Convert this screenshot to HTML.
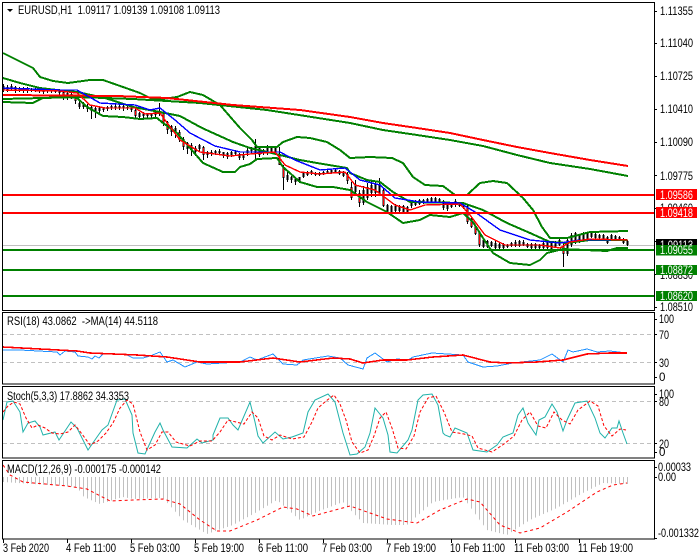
<!DOCTYPE html>
<html><head><meta charset="utf-8"><style>
html,body{margin:0;padding:0;background:#fff;width:700px;height:560px;overflow:hidden}
svg{display:block}
text{font-family:"Liberation Sans",sans-serif;font-size:11.5px;fill:#000}
.w{fill:#fff}
</style></head><body>
<svg width="700" height="560" viewBox="0 0 700 560" xmlns="http://www.w3.org/2000/svg">
<defs><pattern id="p" x="3" y="0" width="4" height="10" patternUnits="userSpaceOnUse"><rect x="0" y="0" width="1" height="10" fill="#c0c0c0"/></pattern></defs>
<rect width="700" height="560" fill="#fff"/>

<!-- horizontal levels under -->
<path d="M3 245.5H654" stroke="#c0c0c0" stroke-width="1"/>

<!-- candles -->
<g fill="none" stroke="#000" shape-rendering="crispEdges">
<path stroke-width="1" d="M3.5 84V92M7.5 85V92M11.5 84V91M15.5 86V93M19.5 87V92M23.5 87V93M27.5 87V93M31.5 88V92M35.5 88V92M39.5 87V93M43.5 88V94M47.5 88V93M51.5 89V93M55.5 90V93M59.5 89V96M63.5 91V100M67.5 92V100M71.5 93V99M75.5 95V104M79.5 101V109M83.5 102V109M87.5 104V112M91.5 106V119M95.5 106V118M99.5 106V114M103.5 107V112M107.5 106V111M111.5 105V110M115.5 104V110M119.5 105V110M123.5 105V111M127.5 106V110M131.5 106V112M135.5 109V118M139.5 112V118M143.5 112V118M147.5 113V118M151.5 113V118M155.5 111V117M159.5 103V116M163.5 112V126M167.5 121V134M171.5 125V136M175.5 126V138M179.5 130V142M183.5 137V150M187.5 142V154M191.5 143V156M195.5 146V156M199.5 144V152M203.5 146V160M207.5 151V158M211.5 150V156M215.5 150V155M219.5 149V155M223.5 152V158M227.5 152V159M231.5 151V157M235.5 150V156M239.5 153V160M243.5 152V160M247.5 146V156M251.5 147V153M255.5 139V160M259.5 147V157M263.5 149V155M267.5 145V155M271.5 146V154M275.5 146V154M279.5 147V165M283.5 165V190M287.5 172V182M291.5 176V183M295.5 178V185M299.5 177V183M303.5 172V178M307.5 171V176M311.5 170V175M315.5 172V176M319.5 172V176M323.5 171V175M327.5 170V174M331.5 169V174M335.5 169V173M339.5 170V175M343.5 171V177M347.5 172V184M351.5 182V200M355.5 180V196M359.5 190V207M363.5 186V205M367.5 183V200M371.5 180V197M375.5 182V197M379.5 178V195M383.5 188V207M387.5 204V213M391.5 205V213M395.5 204V212M399.5 205V212M403.5 205V213M407.5 206V213M411.5 200V208M415.5 200V206M419.5 199V205M423.5 199V204M427.5 198V203M431.5 197V203M435.5 197V203M439.5 198V203M443.5 200V210M447.5 202V211M451.5 202V208M455.5 199V207M459.5 202V207M463.5 202V209M467.5 205V224M471.5 218V228M475.5 225V235M479.5 232V247M483.5 238V248M487.5 240V248M491.5 241V247M495.5 241V249M499.5 243V249M503.5 243V249M507.5 244V248M511.5 242V247M515.5 240V247M519.5 240V247M523.5 240V246M527.5 243V248M531.5 243V249M535.5 243V249M539.5 244V249M543.5 242V249M547.5 240V249M551.5 241V250M555.5 241V248M559.5 238V246M563.5 244V267M567.5 237V256M571.5 233V247M575.5 232V244M579.5 234V243M583.5 232V241M587.5 232V240M591.5 232V238M595.5 233V239M599.5 234V239M603.5 234V240M607.5 236V244M611.5 234V240M615.5 235V240M619.5 236V241M623.5 238V244M627.5 240V246"/>
<path stroke-width="2" d="M3.5 86V90M7.5 87V90M11.5 86V89M15.5 87V91M19.5 88V91M23.5 88V91M27.5 88V91M31.5 89V91M35.5 89V90M39.5 89V91M43.5 89V92M47.5 89V91M51.5 90V91M55.5 90V92M59.5 90V93M63.5 92V97M67.5 93V98M71.5 94V97M75.5 96V101M79.5 103V107M83.5 104V107M87.5 106V109M91.5 107V111M95.5 108V112M99.5 108V111M103.5 108V110M107.5 107V109M111.5 106V108M115.5 106V108M119.5 106V108M123.5 106V108M127.5 107V108M131.5 107V110M135.5 110V116M139.5 113V117M143.5 113V116M147.5 114V116M151.5 114V116M155.5 112V115M159.5 111V114M163.5 113V123M167.5 122V130M171.5 126V132M175.5 128V133M179.5 132V140M183.5 139V147M187.5 143V149M191.5 145V150M195.5 148V152M199.5 145V149M203.5 147V155M207.5 152V155M211.5 152V154M215.5 151V153M219.5 151V153M223.5 152V156M227.5 153V157M231.5 152V155M235.5 152V154M239.5 154V158M243.5 154V158M247.5 150V153M251.5 148V151M255.5 146V154M259.5 148V155M263.5 150V152M267.5 148V151M271.5 148V152M275.5 148V152M279.5 155V165M283.5 167V178M287.5 175V180M291.5 177V180M295.5 179V182M299.5 177V182M303.5 173V177M307.5 172V175M311.5 171V174M315.5 173V175M319.5 173V175M323.5 172V174M327.5 171V173M331.5 170V173M335.5 170V172M339.5 171V174M343.5 172V176M347.5 174V181M351.5 187V198M355.5 185V192M359.5 193V203M363.5 190V203M367.5 187V198M371.5 185V193M375.5 184V193M379.5 184V193M383.5 190V206M387.5 205V212M391.5 206V212M395.5 206V211M399.5 207V211M403.5 206V212M407.5 207V212M411.5 202V206M415.5 201V205M419.5 200V204M423.5 200V203M427.5 199V202M431.5 198V202M435.5 198V202M439.5 199V202M443.5 201V208M447.5 203V209M451.5 203V207M455.5 201V205M459.5 203V206M463.5 203V208M467.5 206V222M471.5 219V227M475.5 226V234M479.5 233V245M483.5 240V247M487.5 241V247M491.5 242V246M495.5 243V248M499.5 244V248M503.5 244V248M507.5 245V247M511.5 243V246M515.5 242V246M519.5 241V246M523.5 242V245M527.5 244V247M531.5 244V248M535.5 244V248M539.5 245V248M543.5 243V248M547.5 242V248M551.5 242V249M555.5 243V247M559.5 240V245M563.5 246V254M567.5 240V254M571.5 235V245M575.5 233V243M579.5 235V242M583.5 233V240M587.5 233V239M591.5 233V237M595.5 234V238M599.5 235V238M603.5 235V239M607.5 237V243M611.5 235V239M615.5 236V239M619.5 237V240M623.5 239V243M627.5 241V245"/>
<path stroke="#f00" stroke-width="1" d="M63.5 93V96M75.5 97V100M135.5 111V115M163.5 114V122M167.5 123V129M179.5 133V139M183.5 140V146M203.5 148V154M279.5 156V164M283.5 168V177M347.5 175V180M351.5 188V197M359.5 194V202M383.5 191V205M467.5 207V221M471.5 220V226M475.5 227V233M479.5 234V244M563.5 247V253"/>
</g>

<!-- bands and MAs -->
<g fill="none" shape-rendering="crispEdges">
<g stroke="#008000" stroke-width="2">
<path d="M3 53L13 58L33 68L40 77L53 81L68 83L90 80L103 80L123 87L140 93L150 98L163 99L177 97L190 92L203 95L220 105L233 120L240 128L252 140L257 147L277 147L283 142L297 137L310 138L327 142L340 150L350 158L370 157L392 158L403 163L413 177L425 185L443 186L455 195L467 195L480 183L493 181L507 183L523 198L533 210L542 227L550 238L567 238L590 232L628 231"/>
<path d="M3 102L33 103L43 98L67 97L77 98L87 107L103 116L123 117L140 119L157 118L163 123L177 133L190 148L203 163L223 172L235 172L240 167L250 164L257 159L277 158L283 167L300 182L317 187L333 187L350 190L367 202L387 212L403 223L420 220L430 215L450 217L463 213L473 222L483 238L493 253L510 263L530 265L540 260L547 253L563 249L607 251L617 248L628 248"/>
<path d="M3 78L20 83L40 88L57 90L77 92L105 98L133 107L160 112L180 116L202 128L233 142L250 148L280 155L300 160L317 163L347 168L350 173L367 180L380 182L393 192L410 202L463 203L483 210L507 223L530 233L550 242L567 243L590 240L627 240"/>
<path d="M3 99L43 98L77 97L133 99L200 103L267 110L350 123L383 130L417 135L450 140L483 146L517 155L550 163L590 169L628 176"/>
</g>
<path stroke="#f00" stroke-width="2" d="M3 95L117 96L167 98L233 105L300 110L350 117L383 123L417 128L450 133L483 140L517 147L550 153L590 160L628 166"/>
<g stroke="#00f" stroke-width="1.4"><path d="M3 88L60 90L77 90L100 103L135 105L150 110L160 108L175 120L190 133L215 146L240 152L260 152L280 152L295 160L320 170L345 168L360 180L380 185L395 198L420 202L460 203L475 212L500 230L530 240L560 243L580 240L628 240"/></g>
<g stroke="#f00" stroke-width="1.4"><path d="M3 90L60 91L77 93L90 105L105 108L135 108L145 114L160 113L165 120L180 140L200 152L230 156L250 154L275 152L285 165L300 172L320 174L345 172L355 185L375 190L395 205L410 210L425 205L460 204L470 215L485 235L505 245L540 245L560 248L570 242L590 239L628 240"/></g>
<g stroke="#f00" stroke-width="2"><path d="M3 195H654M3 213H654"/></g>
<g stroke="#008000" stroke-width="2"><path d="M3 250H654M3 270H654M3 296H654"/></g>
</g>

<!-- RSI -->
<g fill="none">
<path d="M3 334.5H654M3 362.5H654M3 401.5H654M3 443.5H654" stroke="#c0c0c0" stroke-dasharray="4 3"/>
<path stroke="#1e90ff" shape-rendering="crispEdges" d="M3 350L20 350L57 352L60 355L65 351L75 352L78 356L88 357L92 359L95 356L99 358L103 354L125 354L133 358L143 358L150 356L160 352L167 362L173 360L185 367L197 362L207 364L223 363L240 362L250 357L257 360L273 354L283 364L297 365L303 360L328 356L340 358L348 365L363 369L367 358L375 353L387 362L397 359L408 360L413 357L432 353L463 355L468 362L483 367L497 366L513 363L540 360L552 354L563 362L568 350L573 352L587 349L597 352L610 351L627 353"/>
<path stroke="#f00" stroke-width="1.6" shape-rendering="crispEdges" d="M3 347L40 349L77 351L90 353L137 355L167 357L200 362L240 362L273 358L300 362L333 358L350 359L363 363L383 360L407 360L433 357L463 355L490 362L507 363L537 362L563 360L587 354L610 353L627 353"/>
</g>

<!-- Stoch -->
<g fill="none">
<path id="st" stroke="#20b2aa" d="M3 420L7 402L13 401L20 412L23 432L28 423L35 421L40 427L43 435L55 432L59 440L71 422L77 428L88 450L97 437L102 430L108 425L117 400L125 399L132 415L133 433L138 453L145 454L155 432L160 423L163 430L172 447L187 448L197 439L202 443L213 440L213 435L220 418L228 418L233 425L238 430L250 402L255 422L258 436L263 443L275 432L283 439L292 437L303 433L308 412L315 400L328 394L335 402L343 433L350 455L357 454L365 447L370 433L375 408L383 418L388 435L390 452L397 453L408 440L412 430L418 400L423 395L432 394L438 405L443 433L445 435L450 437L455 428L467 433L473 450L487 452L497 445L503 437L513 433L518 415L523 408L528 423L536 435L539 420L545 417L552 404L557 412L563 431L567 420L575 403L587 401L595 418L600 433L605 438L612 428L617 428L619 421L623 433L627 444"/>
<path stroke="#f00" stroke-dasharray="3 2" d="M3 412L8 406L14 402L20 404L26 418L32 428L38 425L45 428L52 433L60 434L68 432L75 425L82 434L90 445L98 441L106 433L113 423L120 408L127 400L133 404L140 432L147 450L155 445L162 432L168 432L176 442L190 446L200 441L212 441L220 432L228 420L236 422L244 424L252 412L258 418L264 436L272 440L280 435L292 439L304 437L312 422L318 408L326 401L334 395L340 404L346 420L352 442L360 453L368 450L374 436L380 418L386 412L392 428L398 448L406 449L414 436L420 412L428 398L436 396L444 412L452 432L464 434L472 436L478 448L492 452L504 444L514 436L522 420L530 412L538 426L546 428L554 412L562 420L570 424L578 410L590 401L598 406L604 426L612 436L620 429L626 430"/>
</g>

<!-- MACD -->
<polygon fill="url(#p)" points="3,477 3,482 33,484 77,487 84,497 100,504 123,497 133,499 163,498 183,520 207,534 233,525 257,512 277,500 300,520 317,512 343,502 363,523 393,525 407,525 433,502 463,497 487,530 507,535 530,520 557,508 583,493 603,483 628,484 628,477"/>
<path fill="none" stroke="#f00" stroke-dasharray="3 3" d="M3 465L10 475L23 482L67 486L87 489L110 501L133 500L163 499L180 504L200 520L217 531L230 531L257 520L283 507L297 509L313 516L350 506L370 513L387 519L417 523L440 510L467 499L480 502L500 525L520 533L540 528L567 512L597 492L613 485L627 483"/>

<!-- frames -->
<g fill="none" stroke="#000" stroke-width="1" shape-rendering="crispEdges">
<rect x="2.5" y="2.5" width="652" height="308"/>
<rect x="2.5" y="312.5" width="652" height="71.5"/>
<rect x="2.5" y="386.5" width="652" height="71.5"/>
<rect x="2.5" y="460.5" width="652" height="78.5"/>
<path d="M654 11.5H657M654 43.5H657M654 76.5H657M654 109.5H657M654 142.5H657M654 175.5H657M654 208.5H657M654 241.5H657M654 274.5H657M654 307.5H657M654 319.5H657M654 334.5H657M654 362.5H657M654 377.5H657M654 394.5H657M654 401.5H657M654 443.5H657M654 452.5H657M654 467.5H657M654 477.5H657M654 538.5H657"/>
<path d="M3.5 539V543M67.5 539V543M131.5 539V543M195.5 539V543M259.5 539V543M323.5 539V543M387.5 539V543M451.5 539V543M515.5 539V543M579.5 539V543"/>
</g>
<polygon points="7,9 13,9 10,12" fill="#000"/>

<!-- titles -->
<text x="18" y="14" textLength="202" lengthAdjust="spacingAndGlyphs" xml:space="preserve">EURUSD,H1  1.09117 1.09139 1.09108 1.09113</text>
<text x="7" y="325" textLength="151" lengthAdjust="spacingAndGlyphs" xml:space="preserve">RSI(18) 43.0862  -&gt;MA(14) 44.5118</text>
<text x="7" y="400" textLength="122" lengthAdjust="spacingAndGlyphs">Stoch(5,3,3) 17.8862 34.3353</text>
<text x="7" y="473" textLength="154" lengthAdjust="spacingAndGlyphs">MACD(12,26,9) -0.000175 -0.000142</text>

<!-- right axis -->
<g>
<text x="660" y="15" textLength="33" lengthAdjust="spacingAndGlyphs">1.11355</text>
<text x="660" y="47" textLength="33" lengthAdjust="spacingAndGlyphs">1.11040</text>
<text x="660" y="80" textLength="33" lengthAdjust="spacingAndGlyphs">1.10725</text>
<text x="660" y="113" textLength="33" lengthAdjust="spacingAndGlyphs">1.10410</text>
<text x="660" y="146" textLength="33" lengthAdjust="spacingAndGlyphs">1.10090</text>
<text x="660" y="180" textLength="33" lengthAdjust="spacingAndGlyphs">1.09775</text>
<text x="660" y="212" textLength="33" lengthAdjust="spacingAndGlyphs">1.09460</text>
<text x="660" y="279" textLength="33" lengthAdjust="spacingAndGlyphs">1.08830</text>
<text x="660" y="311" textLength="33" lengthAdjust="spacingAndGlyphs">1.08510</text>
<rect x="656" y="239" width="41" height="8" fill="#000"/>
<text class="w" x="660" y="249" textLength="33" lengthAdjust="spacingAndGlyphs">1.09113</text>
<rect x="656" y="189" width="41" height="11" fill="#f00"/>
<text class="w" x="660" y="199" textLength="33" lengthAdjust="spacingAndGlyphs">1.09586</text>
<rect x="656" y="207" width="41" height="11" fill="#f00"/>
<text class="w" x="660" y="217" textLength="33" lengthAdjust="spacingAndGlyphs">1.09418</text>
<rect x="656" y="245" width="41" height="10.5" fill="#008000"/>
<text class="w" x="660" y="254" textLength="33" lengthAdjust="spacingAndGlyphs">1.09055</text>
<rect x="656" y="265" width="41" height="10" fill="#008000"/>
<text class="w" x="660" y="274" textLength="33" lengthAdjust="spacingAndGlyphs">1.08872</text>
<rect x="656" y="291" width="41" height="10" fill="#008000"/>
<text class="w" x="660" y="300" textLength="33" lengthAdjust="spacingAndGlyphs">1.08620</text>
<text x="659" y="323" textLength="15" lengthAdjust="spacingAndGlyphs">100</text>
<text x="659" y="339" textLength="10" lengthAdjust="spacingAndGlyphs">70</text>
<text x="659" y="367" textLength="10" lengthAdjust="spacingAndGlyphs">30</text>
<text x="659" y="381">0</text>
<text x="659" y="398" textLength="15" lengthAdjust="spacingAndGlyphs">100</text>
<text x="659" y="406" textLength="10" lengthAdjust="spacingAndGlyphs">80</text>
<text x="659" y="448" textLength="10" lengthAdjust="spacingAndGlyphs">20</text>
<text x="659" y="456">0</text>
<text x="658" y="471" textLength="33" lengthAdjust="spacingAndGlyphs">0.00033</text>
<text x="658" y="481" textLength="18" lengthAdjust="spacingAndGlyphs">0.00</text>
<text x="658" y="537" textLength="41" lengthAdjust="spacingAndGlyphs">-0.001332</text>
</g>

<!-- time axis -->
<g>
<text x="3" y="552" textLength="46" lengthAdjust="spacingAndGlyphs">3 Feb 2020</text>
<text x="66" y="552" textLength="50" lengthAdjust="spacingAndGlyphs">4 Feb 11:00</text>
<text x="130" y="552" textLength="50" lengthAdjust="spacingAndGlyphs">5 Feb 03:00</text>
<text x="194" y="552" textLength="50" lengthAdjust="spacingAndGlyphs">5 Feb 19:00</text>
<text x="258" y="552" textLength="50" lengthAdjust="spacingAndGlyphs">6 Feb 11:00</text>
<text x="322" y="552" textLength="50" lengthAdjust="spacingAndGlyphs">7 Feb 03:00</text>
<text x="386" y="552" textLength="50" lengthAdjust="spacingAndGlyphs">7 Feb 19:00</text>
<text x="450" y="552" textLength="55" lengthAdjust="spacingAndGlyphs">10 Feb 11:00</text>
<text x="514" y="552" textLength="55" lengthAdjust="spacingAndGlyphs">11 Feb 03:00</text>
<text x="578" y="552" textLength="55" lengthAdjust="spacingAndGlyphs">11 Feb 19:00</text>
</g>
</svg>
</body></html>
